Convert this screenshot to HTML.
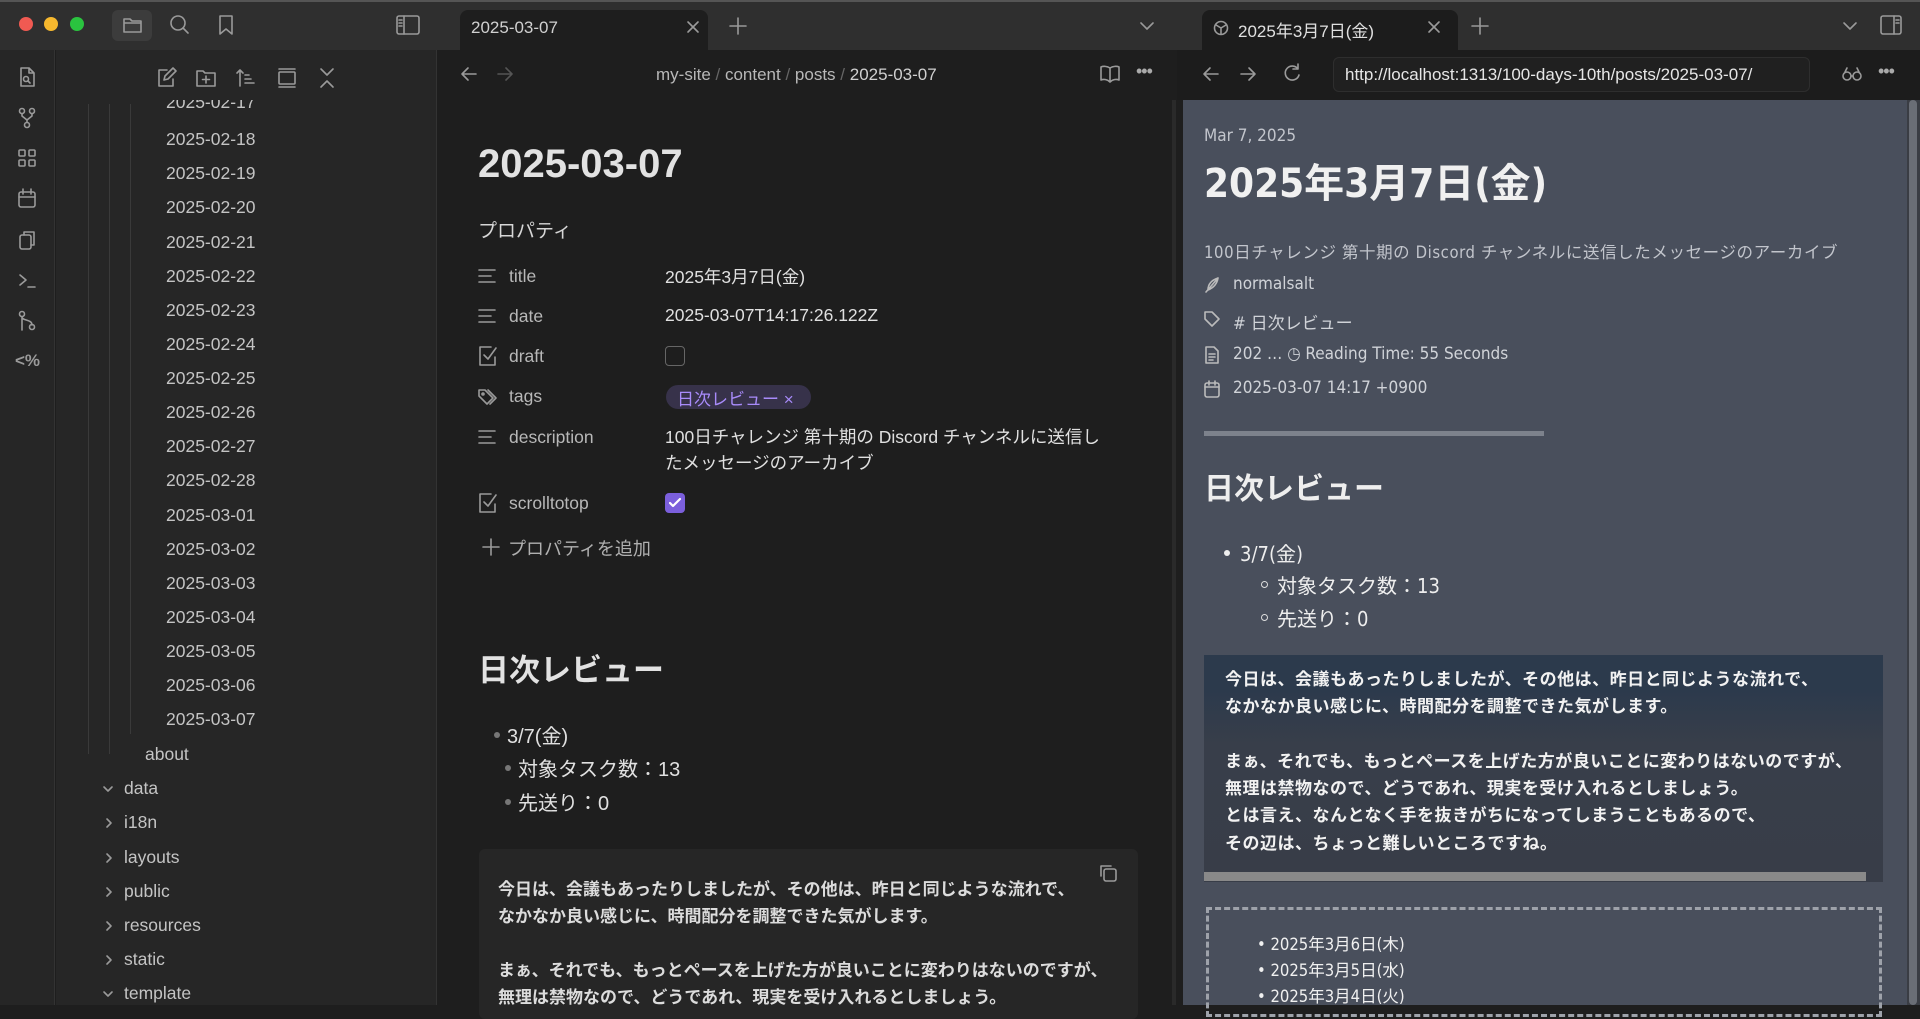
<!DOCTYPE html>
<html><head><meta charset="utf-8"><style>
*{margin:0;padding:0;box-sizing:border-box}
body{width:1920px;height:1005px;overflow:hidden;background:#1e1e1e;font-family:"Liberation Sans","Noto Sans CJK JP",sans-serif;position:relative;color:#dadada}
.a{position:absolute;white-space:nowrap}
svg{position:absolute;fill:none;stroke:#9a9a9a;stroke-width:1.6;stroke-linecap:round;stroke-linejoin:round}
.f{font-size:17.5px;color:#c4c4c4;left:166px}
.w{font-family:"DejaVu Sans Condensed","Noto Sans CJK JP",sans-serif}
</style></head><body>
<!-- title bar -->
<div class="a" style="left:0;top:0;width:1920px;height:50px;background:#2f2f2f;border-top:2px solid #555"></div>
<div class="a" style="left:19px;top:17px;width:14px;height:14px;border-radius:50%;background:#f05a52"></div>
<div class="a" style="left:44px;top:17px;width:14px;height:14px;border-radius:50%;background:#f6b82e"></div>
<div class="a" style="left:70px;top:17px;width:14px;height:14px;border-radius:50%;background:#2ac33f"></div>
<div class="a" style="left:112px;top:10px;width:40px;height:31px;border-radius:6px;background:#3c3c3c"></div>
<svg style="left:122px;top:15px" width="22" height="20"><path d="M2 4h6l2 2h9v11H2z M2 8h17"/></svg>
<svg style="left:169px;top:14px" width="22" height="22"><circle cx="9" cy="9" r="7"/><path d="M14 14l5 5"/></svg>
<svg style="left:217px;top:14px" width="18" height="22"><path d="M3 2h12v18l-6-5-6 5z"/></svg>
<svg style="left:396px;top:15px" width="24" height="20"><rect x="1" y="1" width="22" height="18" rx="2"/><path d="M8 1v18M3 5h3M3 8h3M3 11h3"/></svg>
<!-- editor tab -->
<div class="a" style="left:460px;top:10px;width:248px;height:40px;background:#1e1e1e;border-radius:8px 8px 0 0"></div>
<div class="a" style="left:471px;top:18px;font-size:17px;color:#d0d0d0">2025-03-07</div>
<svg style="left:686px;top:20px" width="14" height="14"><path d="M2 2l10 10M12 2L2 12"/></svg>
<svg style="left:729px;top:17px" width="18" height="18"><path d="M9 1v16M1 9h16"/></svg>
<svg style="left:1139px;top:21px" width="16" height="10"><path d="M2 2l6 6 6-6"/></svg>
<!-- browser tab -->
<div class="a" style="left:1202px;top:10px;width:256px;height:40px;background:#1c1c1c;border-radius:8px 8px 0 0"></div>
<svg style="left:1213px;top:20px" width="16" height="16"><circle cx="8" cy="8" r="6.5"/><path d="M3 5l5 3 5-3M8 8v6"/></svg>
<div class="a" style="left:1238px;top:17px;font-size:17px;color:#e0e0e0">2025年3月7日(金)</div>
<svg style="left:1427px;top:20px" width="14" height="14"><path d="M2 2l10 10M12 2L2 12"/></svg>
<svg style="left:1471px;top:17px" width="18" height="18"><path d="M9 1v16M1 9h16"/></svg>
<svg style="left:1842px;top:21px" width="16" height="10"><path d="M2 2l6 6 6-6"/></svg>
<svg style="left:1880px;top:15px" width="22" height="20"><rect x="1" y="1" width="20" height="18" rx="2"/><path d="M14 1v18M16 5h3M16 8h3"/></svg>
<!-- ribbon -->
<div class="a" style="left:0;top:50px;width:55px;height:955px;background:#262626;border-right:1px solid #333"></div>
<svg style="left:17px;top:66px" width="20" height="22"><path d="M4 2h8l5 5v13H4z M12 2v5h5"/><circle cx="9" cy="13" r="2.5"/><path d="M11 15l2 2"/></svg>
<svg style="left:17px;top:107px" width="20" height="22"><circle cx="5" cy="4" r="2.5"/><circle cx="15" cy="4" r="2.5"/><circle cx="10" cy="18" r="2.5"/><path d="M5 7v2l5 4 5-4V7M10 13v2"/></svg>
<svg style="left:17px;top:148px" width="20" height="20"><rect x="2" y="2" width="6" height="6" rx="1"/><rect x="12" y="2" width="6" height="6" rx="1"/><rect x="2" y="12" width="6" height="6" rx="1"/><rect x="12" y="12" width="6" height="6" rx="1"/></svg>
<svg style="left:17px;top:188px" width="20" height="21"><rect x="2" y="4" width="16" height="15" rx="2"/><path d="M2 9h16M6 1v5M14 1v5"/></svg>
<svg style="left:17px;top:229px" width="20" height="22"><rect x="3" y="6" width="11" height="14" rx="2"/><path d="M7 6V3h10v13h-3"/></svg>
<svg style="left:17px;top:271px" width="20" height="20"><path d="M3 4l6 5-6 5M11 16h7"/></svg>
<svg style="left:17px;top:310px" width="20" height="22"><circle cx="5" cy="4" r="2.5"/><circle cx="15" cy="17" r="2.5"/><path d="M5 7v13M5 7c0 4 10 2 10 8"/></svg>
<div class="a" style="left:15px;top:351px;font-size:17px;font-weight:bold;color:#9a9a9a">&lt;%</div>
<!-- sidebar -->
<div class="a" style="left:56px;top:50px;width:381px;height:955px;background:#262626;border-right:1px solid #333"></div>
<svg style="left:155px;top:67px" width="22" height="22"><path d="M12 3H4v16h14v-7 M9 13l1-4 8-8 3 3-8 8z"/></svg>
<svg style="left:195px;top:67px" width="22" height="22"><path d="M2 4h6l2 2h10v13H2z M11 9v7M7.5 12.5h7"/></svg>
<svg style="left:235px;top:67px" width="22" height="22"><path d="M5 19V3M2 6l3-3 3 3M10 8h4M10 12h6M10 16h9"/></svg>
<svg style="left:276px;top:67px" width="22" height="22"><path d="M3 2h16M3 20h16"/><rect x="3" y="5" width="16" height="12" rx="1"/></svg>
<svg style="left:318px;top:67px" width="18" height="22"><path d="M3 2l6 6 6-6M3 20l6-6 6 6"/></svg>
<div class="a" style="left:88px;top:104px;width:1px;height:650px;background:#3a3a3a"></div>
<div class="a" style="left:109px;top:104px;width:1px;height:650px;background:#3a3a3a"></div>
<div class="a" style="left:130px;top:104px;width:1px;height:630px;background:#3a3a3a"></div>
<div class="a" style="left:56px;top:100px;width:380px;height:14px;overflow:hidden"><div class="a f" style="left:110px;top:-8px">2025-02-17</div></div>
<div class="a f" style="top:129px">2025-02-18</div>
<div class="a f" style="top:163px">2025-02-19</div>
<div class="a f" style="top:197px">2025-02-20</div>
<div class="a f" style="top:232px">2025-02-21</div>
<div class="a f" style="top:266px">2025-02-22</div>
<div class="a f" style="top:300px">2025-02-23</div>
<div class="a f" style="top:334px">2025-02-24</div>
<div class="a f" style="top:368px">2025-02-25</div>
<div class="a f" style="top:402px">2025-02-26</div>
<div class="a f" style="top:436px">2025-02-27</div>
<div class="a f" style="top:470px">2025-02-28</div>
<div class="a f" style="top:505px">2025-03-01</div>
<div class="a f" style="top:539px">2025-03-02</div>
<div class="a f" style="top:573px">2025-03-03</div>
<div class="a f" style="top:607px">2025-03-04</div>
<div class="a f" style="top:641px">2025-03-05</div>
<div class="a f" style="top:675px">2025-03-06</div>
<div class="a f" style="top:709px">2025-03-07</div>
<div class="a f" style="left:145px;top:744px">about</div>
<div class="a f" style="left:124px;top:778px">data</div>
<div class="a f" style="left:124px;top:812px">i18n</div>
<div class="a f" style="left:124px;top:847px">layouts</div>
<div class="a f" style="left:124px;top:881px">public</div>
<div class="a f" style="left:124px;top:915px">resources</div>
<div class="a f" style="left:124px;top:949px">static</div>
<div class="a f" style="left:124px;top:983px">template</div>
<svg style="left:102px;top:784px" width="12" height="10"><path d="M2 3l4 4 4-4"/></svg>
<svg style="left:104px;top:817px" width="10" height="12"><path d="M3 2l4 4-4 4"/></svg>
<svg style="left:104px;top:852px" width="10" height="12"><path d="M3 2l4 4-4 4"/></svg>
<svg style="left:104px;top:886px" width="10" height="12"><path d="M3 2l4 4-4 4"/></svg>
<svg style="left:104px;top:920px" width="10" height="12"><path d="M3 2l4 4-4 4"/></svg>
<svg style="left:104px;top:954px" width="10" height="12"><path d="M3 2l4 4-4 4"/></svg>
<svg style="left:102px;top:989px" width="12" height="10"><path d="M2 3l4 4 4-4"/></svg>
<!-- editor -->
<svg style="left:460px;top:66px" width="18" height="16"><path d="M16 8H2M8 2L2 8l6 6"/></svg>
<svg style="left:496px;top:66px;stroke:#555" width="18" height="16"><path d="M2 8h14M10 2l6 6-6 6"/></svg>
<div class="a" style="left:656px;top:65px;font-size:17px;color:#b8b8b8">my-site <span style="color:#666">/</span> content <span style="color:#666">/</span> posts <span style="color:#666">/</span> <span style="color:#d0d0d0">2025-03-07</span></div>
<svg style="left:1099px;top:64px" width="22" height="20"><path d="M11 4v14M11 4C8 2 4 2 2 3v13c2-1 6-1 9 2 3-3 7-3 9-2V3c-2-1-6-1-9 1"/></svg>
<div class="a" style="left:1136px;top:61px;font-size:18px;color:#aaa;letter-spacing:-1px">•••</div>
<div class="a" style="left:478px;top:142px;font-size:40px;font-weight:bold;color:#e2e2e2">2025-03-07</div>
<div class="a" style="left:478px;top:216px;font-size:19px;color:#d6d6d6">プロパティ</div>
<svg style="left:477px;top:267px" width="22" height="18"><path d="M2 3h16M2 9h12M2 15h16"/></svg>
<svg style="left:477px;top:307px" width="22" height="18"><path d="M2 3h16M2 9h12M2 15h16"/></svg>
<svg style="left:477px;top:345px" width="22" height="22"><path d="M14 2H3v18h15v-8M7 10l4 4 8-11"/></svg>
<svg style="left:477px;top:387px" width="24" height="20"><path d="M2 3v6l8 8 6-6-8-8zM11 3l8 8-6 6"/><circle cx="6" cy="7" r="1"/></svg>
<svg style="left:477px;top:428px" width="22" height="18"><path d="M2 3h16M2 9h12M2 15h16"/></svg>
<svg style="left:477px;top:492px" width="22" height="22"><path d="M14 2H3v18h15v-8M7 10l4 4 8-11"/></svg>
<div class="a" style="left:509px;top:266px;font-size:17.5px;color:#b8b8b8">title</div>
<div class="a" style="left:509px;top:306px;font-size:17.5px;color:#b8b8b8">date</div>
<div class="a" style="left:509px;top:346px;font-size:17.5px;color:#b8b8b8">draft</div>
<div class="a" style="left:509px;top:386px;font-size:17.5px;color:#b8b8b8">tags</div>
<div class="a" style="left:509px;top:427px;font-size:17.5px;color:#b8b8b8">description</div>
<div class="a" style="left:509px;top:493px;font-size:17.5px;color:#b8b8b8">scrolltotop</div>
<div class="a" style="left:665px;top:264px;font-size:17.5px;color:#e0e0e0">2025年3月7日(金)</div>
<div class="a" style="left:665px;top:305px;font-size:17.5px;color:#e0e0e0">2025-03-07T14:17:26.122Z</div>
<div class="a" style="left:665px;top:346px;width:20px;height:20px;border:1.5px solid #666;border-radius:4px"></div>
<div class="a" style="left:666px;top:385px;width:145px;height:24px;border-radius:12px;background:#37324a"></div>
<div class="a" style="left:677px;top:385px;font-size:17px;color:#a88bfa">日次レビュー ×</div>
<div class="a" style="left:665px;top:424px;font-size:17.5px;color:#e0e0e0;line-height:26px;white-space:normal;width:450px">100日チャレンジ 第十期の Discord チャンネルに送信したメッセージのアーカイブ</div>
<div class="a" style="left:665px;top:493px;width:20px;height:20px;border-radius:4px;background:#7b5fdc"></div>
<svg style="left:668px;top:496px;stroke:#fff;stroke-width:2.2" width="14" height="14"><path d="M2 7l3 3 7-7"/></svg>
<svg style="left:482px;top:538px" width="18" height="18"><path d="M9 1v16M1 9h16"/></svg>
<div class="a" style="left:508px;top:535px;font-size:18px;color:#b0b0b0">プロパティを追加</div>
<div class="a" style="left:478px;top:645px;font-size:31px;font-weight:bold;color:#e2e2e2">日次レビュー</div>
<div class="a" style="left:494px;top:732px;width:6px;height:6px;border-radius:50%;background:#777"></div>
<div class="a" style="left:507px;top:720px;font-size:20px;color:#e0e0e0">3/7(金)</div>
<div class="a" style="left:505px;top:765px;width:6px;height:6px;border-radius:50%;background:#777"></div>
<div class="a" style="left:518px;top:753px;font-size:20px;color:#e0e0e0">対象タスク数：13</div>
<div class="a" style="left:505px;top:799px;width:6px;height:6px;border-radius:50%;background:#777"></div>
<div class="a" style="left:518px;top:787px;font-size:20px;color:#e0e0e0">先送り：0</div>
<div class="a" style="left:479px;top:849px;width:659px;height:170px;background:#262626;border-radius:6px"></div>
<svg style="left:1098px;top:863px" width="20" height="20"><rect x="6" y="6" width="12" height="12" rx="2"/><path d="M3 13V3h10"/></svg>
<div class="a" style="left:498px;top:876px;font-size:17px;font-weight:bold;color:#dcdcdc;line-height:27px">今日は、会議もあったりしましたが、その他は、昨日と同じような流れで、<br>なかなか良い感じに、時間配分を調整できた気がします。<br><br>まぁ、それでも、もっとペースを上げた方が良いことに変わりはないのですが、<br>無理は禁物なので、どうであれ、現実を受け入れるとしましょう。</div>
<div class="a" style="left:1172px;top:100px;width:4px;height:905px;background:#2a2a2a"></div>
<!-- browser -->
<div class="a" style="left:1177px;top:50px;width:743px;height:50px;background:#1c1c1c"></div>
<svg style="left:1202px;top:66px" width="18" height="16"><path d="M16 8H2M8 2L2 8l6 6"/></svg>
<svg style="left:1239px;top:66px" width="18" height="16"><path d="M2 8h14M10 2l6 6-6 6"/></svg>
<svg style="left:1282px;top:63px" width="20" height="20"><path d="M16 6a7 7 0 1 0 1 6M16 1v5h-5"/></svg>
<div class="a" style="left:1333px;top:57px;width:477px;height:35px;background:#202020;border:1px solid #2e2e2e;border-radius:6px"></div>
<div class="a" style="left:1345px;top:65px;font-size:17px;color:#e6e6e6">http://localhost:1313/100-days-10th/posts/2025-03-07/</div>
<svg style="left:1841px;top:66px" width="22" height="16"><circle cx="6" cy="10" r="4"/><circle cx="16" cy="10" r="4"/><path d="M10 10h2M4 6l2-4M18 6l-2-4"/></svg>
<div class="a" style="left:1878px;top:61px;font-size:18px;color:#aaa;letter-spacing:-1px">•••</div>
<div class="a" style="left:1177px;top:100px;width:6px;height:905px;background:#1e1e1e"></div>
<div class="a" style="left:1183px;top:100px;width:724px;height:905px;background:#494f5c"></div>
<div class="a" style="left:1907px;top:100px;width:13px;height:905px;background:#3a3d44"></div>
<div class="a" style="left:1909px;top:100px;width:8px;height:905px;background:#6a6e76;border-radius:4px"></div>
<div class="a w" style="left:1204px;top:126px;font-size:17px;color:#c2c5cc">Mar 7, 2025</div>
<div class="a w" style="left:1204px;top:151px;font-size:40px;font-weight:bold;color:#f0f0f0">2025年3月7日(金)</div>
<div class="a w" style="left:1204px;top:239px;font-size:16.5px;color:#c2c5cc;letter-spacing:0.6px">100日チャレンジ 第十期の Discord チャンネルに送信したメッセージのアーカイブ</div>
<svg style="left:1203px;top:275px;stroke:#bbb" width="18" height="20"><path d="M3 17L15 3M5 15c0-6 4-10 10-12-1 6-5 10-10 12"/></svg>
<svg style="left:1203px;top:310px;stroke:#bbb" width="18" height="20"><path d="M2 2h7l7 7-7 7-7-7z"/></svg>
<svg style="left:1203px;top:345px;stroke:#bbb" width="18" height="20"><path d="M3 2h8l4 4v12H3z M6 9h6M6 12h6M6 15h4"/></svg>
<svg style="left:1203px;top:379px;stroke:#bbb" width="18" height="20"><rect x="2" y="4" width="14" height="14" rx="2"/><path d="M2 8h14M6 2v4M12 2v4"/></svg>
<div class="a w" style="left:1233px;top:274px;font-size:17px;color:#d0d3d8">normalsalt</div>
<div class="a w" style="left:1233px;top:309px;font-size:17px;color:#d0d3d8"># 日次レビュー</div>
<div class="a w" style="left:1233px;top:344px;font-size:17px;color:#d0d3d8">202 … ◷ Reading Time: 55 Seconds</div>
<div class="a w" style="left:1233px;top:378px;font-size:17px;color:#d0d3d8">2025-03-07 14:17 +0900</div>
<div class="a" style="left:1204px;top:431px;width:340px;height:5px;background:#7d828c"></div>
<div class="a w" style="left:1204px;top:464px;font-size:30px;font-weight:bold;color:#eeeeee">日次レビュー</div>
<div class="a" style="left:1224px;top:550px;width:6px;height:6px;border-radius:50%;background:#eee"></div>
<div class="a w" style="left:1240px;top:538px;font-size:20px;color:#eeeeee">3/7(金)</div>
<div class="a" style="left:1261px;top:581px;width:7px;height:7px;border-radius:50%;border:1.3px solid #ddd"></div>
<div class="a w" style="left:1277px;top:570px;font-size:20px;color:#eeeeee">対象タスク数：13</div>
<div class="a" style="left:1261px;top:614px;width:7px;height:7px;border-radius:50%;border:1.3px solid #ddd"></div>
<div class="a w" style="left:1277px;top:603px;font-size:20px;color:#eeeeee">先送り：0</div>
<div class="a" style="left:1204px;top:655px;width:679px;height:227px;background:linear-gradient(#2c3a4c 0,#2c3a4c 35px,#383e4a 90px,#383d48 100%)"></div>
<div class="a" style="left:1204px;top:872px;width:662px;height:9px;background:#898989"></div>
<div class="a w" style="left:1225px;top:667px;font-size:17px;font-weight:bold;color:#f2f2f2;line-height:27.3px;letter-spacing:0.5px">今日は、会議もあったりしましたが、その他は、昨日と同じような流れで、<br>なかなか良い感じに、時間配分を調整できた気がします。<br><br>まぁ、それでも、もっとペースを上げた方が良いことに変わりはないのですが、<br>無理は禁物なので、どうであれ、現実を受け入れるとしましょう。<br>とは言え、なんとなく手を抜きがちになってしまうこともあるので、<br>その辺は、ちょっと難しいところですね。</div>
<div class="a" style="left:1206px;top:907px;width:676px;height:110px;border:3px dashed #9ea2aa"></div>
<div class="a w" style="left:1257px;top:932px;font-size:16.5px;color:#f0f0f0;line-height:25.8px">• 2025年3月6日(木)<br>• 2025年3月5日(水)<br>• 2025年3月4日(火)</div>
</body></html>
